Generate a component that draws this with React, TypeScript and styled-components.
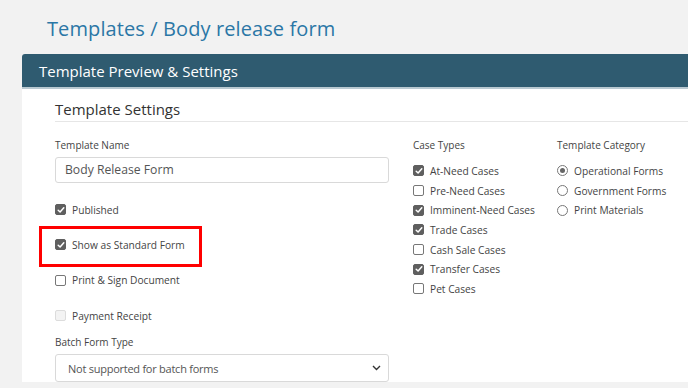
import React from "react";
import styled, { createGlobalStyle } from "styled-components";

const Global = createGlobalStyle`
  html, body { margin: 0; padding: 0; background: #f2f2f2; }
  body { font-family: "Open Sans", "Noto Sans", Arial, sans-serif; color: #444; overflow: hidden; }
  * { box-sizing: border-box; }
`;

const Page = styled.div`
  width: 688px;
  height: 388px;
  overflow: hidden;
  padding: 17px 0 0 22px;
`;

const Title = styled.h1`
  margin: 0 0 13px 25px;
  font-size: 20px;
  font-weight: 400;
  color: #2b77a6;
  line-height: 24px;
  letter-spacing: 0.1px;
`;

const Card = styled.div`
  width: 700px;
  background: #fff;
  border-radius: 3px 0 0 0;
`;

const CardHeader = styled.div`
  height: 35px;
  background: #2f5b70;
  color: #fff;
  font-size: 15px;
  line-height: 34px;
  padding-left: 17px;
  border-radius: 3px 0 0 0;
  border-bottom: 2px solid #b9c9d1;
`;

const CardBody = styled.div`
  padding: 10px 0 0 33px;
`;

const SectionTitle = styled.h2`
  margin: 0;
  font-size: 15px;
  font-weight: 400;
  color: #333;
  line-height: 20px;
  padding-bottom: 2px;
  border-bottom: 1px solid #e6e6e6;
`;

const Columns = styled.div`
  display: grid;
  grid-template-columns: 334px 120px 1fr;
  column-gap: 24px;
  padding-top: 16px;
`;

const Column = styled.div`
  display: flex;
  flex-direction: column;
`;

const Label = styled.div<{ $mb?: number }>`
  font-size: 10px;
  line-height: 14px;
  color: #444;
  white-space: nowrap;
  margin-bottom: ${(p) => p.$mb ?? 5}px;
`;

const TextInput = styled.div`
  height: 26px;
  border: 1px solid #d9d9d9;
  border-radius: 3px;
  padding-left: 9px;
  font-size: 12.2px;
  line-height: 24px;
  color: #555;
`;

const SelectBox = styled.div`
  height: 28px;
  border: 1px solid #d9d9d9;
  border-radius: 3px;
  padding: 0 7px 0 12px;
  font-size: 11px;
  letter-spacing: -0.25px;
  color: #555;
  display: flex;
  align-items: center;
  justify-content: space-between;
`;

const CheckRow = styled.div<{ $h: number }>`
  position: relative;
  height: ${(p) => p.$h}px;
  display: flex;
  align-items: center;
  gap: 6px;
  font-size: 10.2px;
  color: #444;
  white-space: nowrap;
`;

const Box = styled.span<{ $checked?: boolean; $disabled?: boolean }>`
  width: 11px;
  height: 11px;
  flex: none;
  border-radius: 2px;
  display: inline-flex;
  align-items: center;
  justify-content: center;
  background: ${(p) => (p.$checked ? "#5f5f5f" : p.$disabled ? "#f3f3f3" : "#fff")};
  border: 1px solid ${(p) => (p.$checked ? "#5f5f5f" : p.$disabled ? "#dcdcdc" : "#777")};
`;

const Radio = styled.span<{ $checked?: boolean }>`
  width: 11px;
  height: 11px;
  flex: none;
  border-radius: 50%;
  border: 1px solid #777;
  background: #fff;
  display: inline-flex;
  align-items: center;
  justify-content: center;
  &::after {
    content: "";
    display: ${(p) => (p.$checked ? "block" : "none")};
    width: 5px;
    height: 5px;
    border-radius: 50%;
    background: #666;
  }
`;

const Highlight = styled.div`
  position: absolute;
  left: -16px;
  top: -1px;
  width: 163px;
  height: 41px;
  border: 3px solid #f00;
  pointer-events: none;
`;

const Spacer = styled.div<{ $h: number }>`
  height: ${(p) => p.$h}px;
  flex: none;
`;

const Check = () => (
  <svg width="8" height="8" viewBox="0 0 8 8">
    <path d="M1.2 4.2 L3.1 6 L6.8 1.8" fill="none" stroke="#fff" strokeWidth="1.5" strokeLinecap="round" strokeLinejoin="round" />
  </svg>
);

const CheckBox = ({ checked, disabled }: { checked?: boolean; disabled?: boolean }) => (
  <Box $checked={checked} $disabled={disabled}>{checked && <Check />}</Box>
);

const caseTypes: [string, boolean][] = [
  ["At-Need Cases", true],
  ["Pre-Need Cases", false],
  ["Imminent-Need Cases", true],
  ["Trade Cases", true],
  ["Cash Sale Cases", false],
  ["Transfer Cases", true],
  ["Pet Cases", false],
];

const categories: [string, boolean][] = [
  ["Operational Forms", true],
  ["Government Forms", false],
  ["Print Materials", false],
];

export default function App() {
  return (
    <>
      <Global />
      <Page>
        <Title>Templates / Body release form</Title>
        <Card>
          <CardHeader>Template Preview &amp; Settings</CardHeader>
          <CardBody>
            <SectionTitle>Template Settings</SectionTitle>
            <Columns>
              <Column>
                <Label>Template Name</Label>
                <TextInput>Body Release Form</TextInput>
                <Spacer $h={9} />
                <CheckRow $h={35}>
                  <CheckBox checked />
                  Published
                </CheckRow>
                <CheckRow $h={35}>
                  <CheckBox checked />
                  Show as Standard Form
                  <Highlight />
                </CheckRow>
                <CheckRow $h={36}>
                  <CheckBox />
                  Print &amp; Sign Document
                </CheckRow>
                <CheckRow $h={35}>
                  <CheckBox disabled />
                  Payment Receipt
                </CheckRow>
                <Spacer $h={2} />
                <Label $mb={5}>Batch Form Type</Label>
                <SelectBox>
                  Not supported for batch forms
                  <svg width="9" height="6" viewBox="0 0 9 6">
                    <path d="M1 1 L4.5 4.5 L8 1" fill="none" stroke="#333" strokeWidth="1.4" />
                  </svg>
                </SelectBox>
              </Column>
              <Column>
                <Label $mb={9}>Case Types</Label>
                {caseTypes.map(([t, c]) => (
                  <CheckRow key={t} $h={19.7}>
                    <CheckBox checked={c} />
                    {t}
                  </CheckRow>
                ))}
              </Column>
              <Column>
                <Label $mb={9}>Template Category</Label>
                {categories.map(([t, c]) => (
                  <CheckRow key={t} $h={19.7}>
                    <Radio $checked={c} />
                    {t}
                  </CheckRow>
                ))}
              </Column>
            </Columns>
          </CardBody>
        </Card>
      </Page>
    </>
  );
}
